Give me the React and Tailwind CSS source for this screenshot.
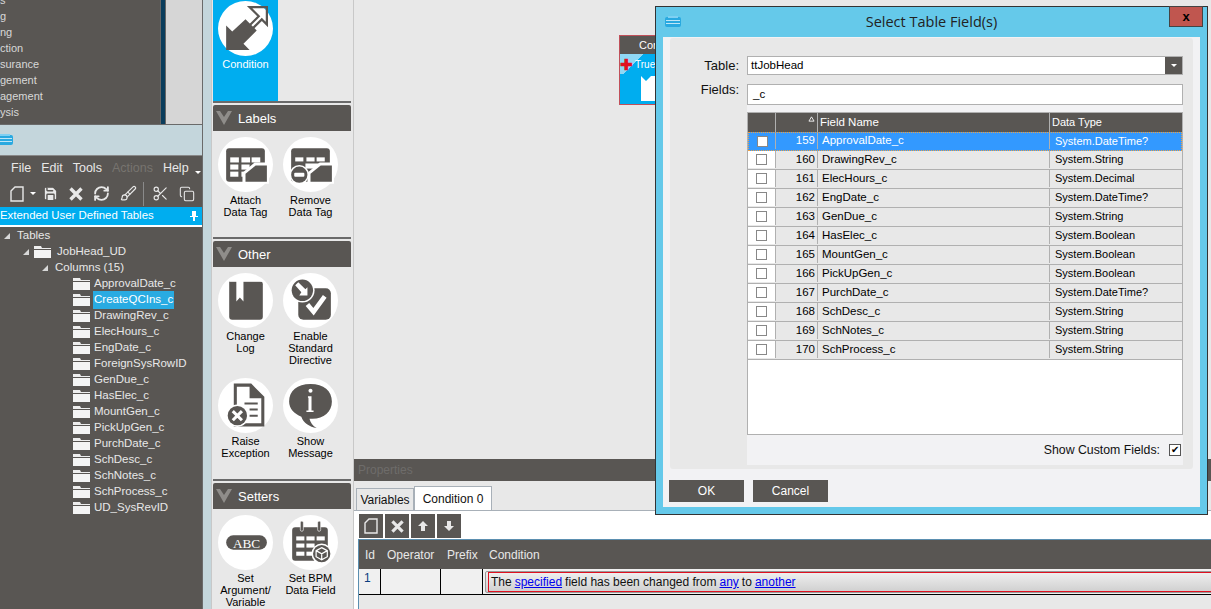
import { Brush, Copy, RefreshCw, Save, Scissors } from "lucide-react";

const columns = [
  "ApprovalDate_c", "CreateQCIns_c", "DrawingRev_c", "ElecHours_c", "EngDate_c", "ForeignSysRowID", "GenDue_c",
  "HasElec_c", "MountGen_c", "PickUpGen_c", "PurchDate_c", "SchDesc_c", "SchNotes_c", "SchProcess_c", "UD_SysRevID",
];

const fields = [
  [159, "ApprovalDate_c", "System.DateTime?"],
  [160, "DrawingRev_c", "System.String"],
  [161, "ElecHours_c", "System.Decimal"],
  [162, "EngDate_c", "System.DateTime?"],
  [163, "GenDue_c", "System.String"],
  [164, "HasElec_c", "System.Boolean"],
  [165, "MountGen_c", "System.Boolean"],
  [166, "PickUpGen_c", "System.Boolean"],
  [167, "PurchDate_c", "System.DateTime?"],
  [168, "SchDesc_c", "System.String"],
  [169, "SchNotes_c", "System.String"],
  [170, "SchProcess_c", "System.String"],
];

const clipped = ["s", "g", "ng", "ction", "surance", "gement", "agement", "ysis"];

function DbIcon({ className }) {
  return (
    <svg viewBox="0 0 16 12" className={className}>
      <rect x="0" y="1" width="16" height="10" rx="2" fill="#29a9e0" />
      <rect x="1" y="4" width="14" height="1" fill="#bfe6f7" />
      <rect x="1" y="7" width="14" height="1" fill="#bfe6f7" />
      <rect x="3" y="0" width="10" height="2" fill="#7fd0f2" />
    </svg>
  );
}

function Folder() {
  return (
    <svg viewBox="0 0 17 12" className="h-3 w-[17px] shrink-0">
      <path d="M0 0h7l1 2h9v1H0z" fill="#eeeeee" />
      <path d="M0 4h17v8H0z" fill="#f4f4f4" />
    </svg>
  );
}

function Expander() {
  return (
    <svg viewBox="0 0 6 6" className="h-[6px] w-[6px] shrink-0">
      <path d="M6 0v6H0z" fill="#d8d8d8" />
    </svg>
  );
}

function NewDoc({ className }) {
  return (
    <svg viewBox="0 0 14 16" className={className} fill="none" stroke="#e8e8e8" strokeWidth="1.4">
      <path d="M1 5l4-4h8v14H1z" />
    </svg>
  );
}

function XMark({ className }) {
  return (
    <svg viewBox="0 0 14 14" className={className} stroke="#e8e8e8" strokeWidth="3.4">
      <path d="M1.500 1.500l11 11M12.500 1.500l-11 11" />
    </svg>
  );
}

function ConditionIcon() {
  return (
    <g>
      <path d="M8 48V24l6 6 13-12 11 11-13 13 6 6z" fill="#595653" />
      <path d="M31 6h17v17l-5-5-14 14-3-3 14-14z" fill="none" stroke="#595653" strokeWidth="2.2" />
    </g>
  );
}

function TableTag({ minus }) {
  return (
    <g>
      <path d="M8 14a3 3 0 0 1 3-3h32a3 3 0 0 1 3 3v30H11a3 3 0 0 1-3-3z" fill="#595653" />
      {[12, 23, 33].map((x) => (
        <rect key={x} x={x} y={20} width={minus ? 8 : 8.500} height={minus ? 4 : 5} fill="#fff" />
      ))}
      {minus ? (
        <rect x="22" y="26" width="20" height="5" fill="#fff" />
      ) : (
        <>
          <rect x="12" y="27" width="8" height="5" fill="#fff" />
          <rect x="23" y="27" width="8" height="5" fill="#fff" />
          <rect x="12" y="34" width="8" height="5" fill="#fff" />
          <rect x="23" y="34" width="4" height="5" fill="#fff" />
        </>
      )}
      <path d="M24 35l12-10h14v21H24z" fill="#fff" />
      <path d="M27 36l10-8h11v16H27z" fill="#595653" />
      {minus && (
        <>
          <circle cx="16" cy="37" r="9.500" fill="#fff" />
          <circle cx="16" cy="37" r="8" fill="#595653" />
          <rect x="11" y="35" width="10" height="4" rx="1" fill="#fff" />
        </>
      )}
    </g>
  );
}

function BookIcon() {
  return (
    <g>
      <path d="M11 8h30a3 3 0 0 1 3 3v32a3 3 0 0 1-3 3H14a3 3 0 0 1-3-3z" fill="#595653" />
      <path d="M18 6h7v22l-3.500-4-3.500 4z" fill="#fff" />
      <path d="M11 7h33v1.500H11z" fill="#fff" />
    </g>
  );
}

function DirectiveIcon() {
  return (
    <g>
      <rect x="15" y="15" width="32" height="31" rx="5" fill="#595653" />
      <path d="M24 31l6 7 11-15" fill="none" stroke="#fff" strokeWidth="4.500" />
      <circle cx="19" cy="17" r="12" fill="#fff" />
      <circle cx="19" cy="17" r="10.500" fill="#595653" />
      <path d="M12 12l3-3 7 7 2-2v8h-8l2-3z" fill="#fff" />
    </g>
  );
}

function ExceptionIcon() {
  return (
    <g>
      <path d="M17 7h15l12 12v27H17z" fill="none" stroke="#595653" strokeWidth="3" />
      <path d="M31 7v13h13z" fill="#595653" />
      <path d="M26 25h13M31 31h8M31 37h8" stroke="#595653" strokeWidth="2" />
      <circle cx="19" cy="37" r="11" fill="#fff" />
      <circle cx="19" cy="37" r="9.500" fill="#595653" />
      <path d="M14.500 32.500l9 9M23.500 32.500l-9 9" stroke="#fff" strokeWidth="3" />
    </g>
  );
}

function MessageIcon() {
  return (
    <g>
      <path d="M27 6c13 0 21 7 21 17s-8 17-19 17c-1 0-2 0-3 0 1 4 3 7 7 9-7-1-13-5-15-11C11 35 6 30 6 23 6 13 14 6 27 6z" fill="#595653" />
      <circle cx="27" cy="12.500" r="2" fill="#fff" />
      <path d="M24.500 18h3.500v14h2v1.500h-7V32h2V19.500h-.500z" fill="#fff" />
    </g>
  );
}

function AbcIcon() {
  return (
    <g>
      <rect x="8" y="20" width="40" height="14" rx="7" fill="#595653" />
      <text x="28" y="32" textAnchor="middle" fontSize="13" fill="#fff" fontFamily="Liberation Serif, serif">ABC</text>
    </g>
  );
}

function BpmFieldIcon() {
  return (
    <g>
      <path d="M9 15a3 3 0 0 1 3-3h29a3 3 0 0 1 3 3v20H31v10H12a3 3 0 0 1-3-3z" fill="#595653" />
      <rect x="17" y="6" width="3" height="10" rx="1.500" fill="#595653" stroke="#fff" strokeWidth="0.600" />
      <rect x="34" y="6" width="3" height="10" rx="1.500" fill="#595653" stroke="#fff" strokeWidth="0.600" />
      {[[13, 21], [23, 21], [33, 21], [13, 28], [23, 28], [13, 36], [23, 36]].map(([x, y]) => (
        <rect key={`${x}-${y}`} x={x} y={y} width={8} height={4} fill="#fff" />
      ))}
      <circle cx="38" cy="38" r="10" fill="#fff" />
      <circle cx="38" cy="38" r="8.500" fill="#595653" />
      <path d="M38 32l5.500 3v6L38 44l-5.500-3v-6zM32.500 35l5.500 3 5.500-3M38 38v6" fill="none" stroke="#fff" strokeWidth="1.200" />
    </g>
  );
}

function Tool({ label, icon, className = "" }) {
  return (
    <div className={`flex w-[65px] flex-col items-center ${className}`}>
      <svg viewBox="0 0 54 54" className="h-[55px] w-[55px]">
        <circle cx="27" cy="27" r="27" fill="#fff" />
        {icon}
      </svg>
      <div className="mt-[2px] text-center text-[11px] leading-[12px] text-black">
        {label.map((l) => (
          <div key={l}>{l}</div>
        ))}
      </div>
    </div>
  );
}

function Section({ title, className = "", children }) {
  return (
    <div className={`border-t-2 border-[#6a6a6a] pt-[2px] ${className}`}>
      <div className="flex h-[26px] items-center gap-[6px] rounded-t-[2px] bg-[#595653] pl-[3px] text-[13px] text-white">
        <svg viewBox="0 0 16 14" className="h-[14px] w-4">
          <path d="M0 0h4l4 6 4-6h4L8 14z" fill="#8f8d8a" />
        </svg>
        <span className="pt-px">{title}</span>
      </div>
      {children}
    </div>
  );
}

function Dialog() {
  return (
    <div className="absolute left-[655px] top-[6px] h-[509px] w-[553px] border border-[#333] bg-[#65c9ea] font-['Liberation_Sans',sans-serif]">
      <div className="relative flex h-[30px] items-center justify-center pb-px text-[#222]">
        <DbIcon className="absolute left-[9px] top-[9px] h-3 w-4" />
        <span className="font-['Open_Sans',sans-serif] text-[14.5px]">Select Table Field(s)</span>
        <div className="absolute right-[4px] top-[-1px] flex h-[21px] w-[34px] items-center justify-center border border-[#444] bg-[#c0564f] text-[13px] font-bold text-black">
          x
        </div>
      </div>
      <div className="mx-[7px] h-[470px] bg-[#f2f2f4] px-[7px] pt-[1px]">
        <div className="flex h-[431px] rounded-[3px] bg-[#e8e8e8]">
          <div className="w-[69px] shrink-0 pt-[18px] text-right text-[13px] text-[#111]">
            <div className="flex h-[19px] items-center justify-end">Table:</div>
            <div className="mt-[5px] flex h-[19px] items-center justify-end">Fields:</div>
          </div>
          <div className="ml-[8px] flex w-[436px] shrink-0 flex-col pt-[18px]">
            <div className="flex h-[19px] items-center border border-[#b0b0b0] bg-white pl-[3px] text-[11.5px] text-black">
              <span className="flex-1">ttJobHead</span>
              <div className="flex h-full w-[17px] items-center justify-center bg-[#595653]">
                <div className="h-0 w-0 border-x-[3px] border-t-[3px] border-x-transparent border-t-white" />
              </div>
            </div>
            <div className="mt-[9px] flex h-[21px] items-center border border-[#b0b0b0] bg-white pl-[5px] text-[11.500px] text-black">_c</div>
            <div className="h-[7px] bg-[#f2f2f4]" />
            <div className="flex h-[323px] flex-col border border-[#b0b0b0] bg-white">
              <div className="flex h-[19px] bg-[#595653] text-[11.500px] text-white">
                <div className="w-[28px] border-r border-[#b0b0b0]" />
                <div className="relative w-[42px] border-r border-[#b0b0b0]">
                  <svg viewBox="0 0 8 7" className="absolute right-[2px] top-[3px] h-[6px] w-[7px]">
                    <path d="M4 1l3 5H1z" fill="none" stroke="#fff" />
                  </svg>
                </div>
                <div className="flex w-[232px] items-center border-r border-[#b0b0b0] pl-[2px]">Field Name</div>
                <div className="flex flex-1 items-center pl-[2px] text-[11px]">Data Type</div>
              </div>
              {fields.map(([id, name, type], i) => (
                <div
                  key={id}
                  className={`flex h-[19px] pb-px text-[11.500px] ${
                    i === 0
                      ? "border border-dotted border-[#f0a040] bg-[#3399ff] text-white"
                      : "border-b border-[#b0b0b0] bg-[#e8e8e8] text-black"
                  }`}
                >
                  <div className={`flex shrink-0 items-center justify-center border-r border-[#b0b0b0] ${i === 0 ? "w-[27px]" : "w-[28px] bg-white"}`}>
                    <div className="h-[11px] w-[11px] border border-[#888] bg-white" />
                  </div>
                  <div className="flex w-[42px] shrink-0 items-center justify-end border-r border-[#b0b0b0] pr-[2px]">{id}</div>
                  <div className="flex w-[232px] shrink-0 items-center border-r border-[#b0b0b0] pl-[4px]">{name}</div>
                  <div className="flex flex-1 items-center pl-[5px] text-[11px]">{type}</div>
                </div>
              ))}
            </div>
            <div className="flex h-[30px] items-center justify-end gap-[9px] bg-[#f2f2f4] pr-[2px] text-[12.3px] text-[#111]">
              Show Custom Fields:
              <div className="flex h-[12px] w-[12px] items-center justify-center border border-[#555] bg-white text-[10px] leading-none text-black">✔</div>
            </div>
          </div>
        </div>
        <div className="mt-[11px] flex gap-[9px] text-[12px] text-white">
          <div className="-ml-[1px] flex h-[22px] w-[75px] items-center justify-center bg-[#595653]">OK</div>
          <div className="flex h-[22px] w-[75px] items-center justify-center bg-[#595653]">Cancel</div>
        </div>
      </div>
    </div>
  );
}

export default function App() {
  return (
    <div className="relative flex h-[609px] w-[1211px] overflow-hidden bg-[#c4d6dc] font-['Liberation_Sans',sans-serif]">
      {/* left dock */}
      <div className="flex h-full w-[203px] shrink-0 flex-col border-r border-[#6a6a6a]">
        <div className="flex h-[125px] shrink-0 border-b border-[#6a6a6a]">
          <div className="w-[160px] overflow-hidden bg-[#595653] text-[11px] leading-[16px] text-[#d8d8d8]">
            <div className="-mt-[8px]">
              {clipped.map((t) => (
                <div key={t} className="h-[16px]">{t}</div>
              ))}
            </div>
          </div>
          <div className="w-[6px] border-x border-[#666] bg-[#0a3d5c]" />
          <div className="flex-1 bg-[#d6d6d6]" />
        </div>
        <div className="flex h-[30px] shrink-0 items-center">
          <DbIcon className="-ml-[3px] h-3 w-4" />
        </div>
        <div className="flex flex-1 flex-col bg-[#595653] text-[#e8e8e8]">
          <div className="relative flex h-[25px] items-center gap-[10px] border-t border-[#888] pl-[11px] pt-px text-[12.5px]">
            <span>File</span>
            <span>Edit</span>
            <span>Tools</span>
            <span className="text-[#77746f]">Actions</span>
            <span>Help</span>
            <div className="absolute left-[195px] top-[15px] h-0 w-0 border-x-[3px] border-t-[3px] border-x-transparent border-t-white" />
          </div>
          <div className="flex h-[27px] items-center pl-[10px]">
            <NewDoc className="h-[16px] w-[14px]" />
            <div className="ml-[6px] h-0 w-0 border-x-[3px] border-t-[3px] border-x-transparent border-t-white" />
            <Save size={17} className="ml-[6px] fill-[#e8e8e8] text-[#595653]" />
            <XMark className="ml-[10px] h-[14px] w-[14px]" />
            <RefreshCw size={17} strokeWidth={2.6} className="ml-[10px]" />
            <Brush size={17} strokeWidth={1.6} className="ml-[10px]" />
            <div className="ml-[6px] h-[24px] w-px bg-[#8a8a8a]" />
            <Scissors size={17} strokeWidth={1.6} className="ml-[8px]" />
            <Copy size={16} strokeWidth={1.6} className="ml-[10px]" />
          </div>
          <div className="flex h-[18px] items-center justify-between bg-[#00adef] pr-[4px] text-[11.400px] text-white">
            Extended User Defined Tables
            <svg viewBox="0 0 8 10" className="h-[10px] w-2">
              <path d="M2 0h4v5h2v1H5v4H3V6H0V5h2z" fill="#fff" />
            </svg>
          </div>
          <div className="h-[2px] bg-white" />
          <div className="pt-[1px] text-[11.500px]">
            <div className="flex h-[16px] items-center gap-[7px] pl-[4px]"><Expander />Tables</div>
            <div className="flex h-[16px] items-center gap-[5px] pl-[23px]"><Expander /><Folder /><span className="ml-[1px]">JobHead_UD</span></div>
            <div className="flex h-[16px] items-center gap-[7px] pl-[42px]"><Expander />Columns (15)</div>
            {columns.map((c) => (
              <div key={c} className="flex h-[16px] items-center gap-[3px] pl-[73px]">
                <Folder />
                <span className={`px-[1px] ${c === "CreateQCIns_c" ? "bg-[#29abe2] text-white" : ""}`}>{c}</span>
              </div>
            ))}
          </div>
        </div>
      </div>

      {/* activity palette */}
      <div className="ml-[8px] h-full w-[143px] shrink-0 overflow-hidden border-x border-[#c8c8c8] bg-[#e8e8e8] pl-px">
        <div className="h-[101px] w-[65px] bg-[#00adef] pt-px">
          <div className="flex flex-col items-center">
            <svg viewBox="0 0 54 54" className="h-[55px] w-[55px]">
              <circle cx="27" cy="27" r="27" fill="#fff" />
              <ConditionIcon />
            </svg>
            <div className="text-[11px] text-white">Condition</div>
          </div>
        </div>
        <div className="w-[138px]">
          <Section title="Labels" className="h-[136px]">
            <div className="flex pt-[6px]">
              <Tool label={["Attach", "Data Tag"]} icon={<TableTag />} />
              <Tool label={["Remove", "Data Tag"]} icon={<TableTag minus />} />
            </div>
          </Section>
          <Section title="Other" className="h-[242px]">
            <div className="flex pt-[6px]">
              <Tool label={["Change", "Log"]} icon={<BookIcon />} />
              <Tool label={["Enable", "Standard", "Directive"]} icon={<DirectiveIcon />} />
            </div>
            <div className="flex pt-[12px]">
              <Tool label={["Raise", "Exception"]} icon={<ExceptionIcon />} />
              <Tool label={["Show", "Message"]} icon={<MessageIcon />} />
            </div>
          </Section>
          <Section title="Setters">
            <div className="flex pt-[6px]">
              <Tool label={["Set", "Argument/", "Variable"]} icon={<AbcIcon />} />
              <Tool label={["Set BPM", "Data Field"]} icon={<BpmFieldIcon />} />
            </div>
          </Section>
        </div>
      </div>

      {/* canvas and properties */}
      <div className="flex h-full min-w-0 flex-1 flex-col bg-[#e8e8e8]">
        <div className="relative h-[459px] shrink-0 pl-px">
          <div className="absolute left-[265px] top-[35px] h-[70px] w-[40px] border border-[#c0505a] bg-[#00adef]">
            <div className="h-[18px] bg-[#595653] pl-[19px] text-[11px] leading-[18px] text-white">Con</div>
            <div className="flex h-[20px] items-center gap-[2px] bg-[linear-gradient(135deg,#8fd8f5_40%,#00adef_40%)] text-[10px] text-white">
              <span className="text-[15px] font-bold leading-none text-[#e01020]">✚</span>
              True
            </div>
            <svg viewBox="0 0 20 25" className="ml-[21px] mt-[2px] h-[25px] w-[20px]">
              <path d="M0 0l5 5 5-5h10v25H0z" fill="#fff" />
            </svg>
          </div>
        </div>
        <div className="flex h-[22px] shrink-0 items-center bg-[#595653] pl-[4px] text-[12px] text-[#6e6c6a]">Properties</div>
        <div className="flex h-[29px] shrink-0 items-end pl-[2px] text-[12px] text-[#111]">
          <div className="flex h-[22px] w-[58px] items-center justify-center border border-b-0 border-[#a8b0b8] bg-[#e8e8e8]">Variables</div>
          <div className="flex h-[24px] w-[78px] items-center justify-center border border-b-0 border-[#a8b0b8] bg-white">Condition 0</div>
        </div>
        <div className="flex flex-1 flex-col border-t border-[#a8b0b8] bg-white pl-[4px]">
          <div className="flex h-[28px] shrink-0 items-start gap-[2px] pl-px pt-[3px]">
            <div className="flex h-[24px] w-[24px] items-center justify-center bg-[#595653]"><NewDoc className="h-[16px] w-[14px]" /></div>
            <div className="flex h-[24px] w-[24px] items-center justify-center bg-[#595653]"><XMark className="h-[13px] w-[13px]" /></div>
            <div className="flex h-[24px] w-[24px] items-center justify-center bg-[#595653] text-[#e8e8e8]">
              <svg viewBox="0 0 10 10" className="h-[10px] w-[10px]"><path d="M5 0l5 5H7v5H3V5H0z" fill="currentColor" /></svg>
            </div>
            <div className="flex h-[24px] w-[24px] items-center justify-center bg-[#595653] text-[#e8e8e8]">
              <svg viewBox="0 0 10 10" className="h-[10px] w-[10px]"><path d="M5 10L0 5h3V0h4v5h3z" fill="currentColor" /></svg>
            </div>
          </div>
          <div className="flex flex-1 flex-col border-l border-t border-[#5b8fb0] bg-[#e8e8e8] text-[12px]">
            <div className="flex h-[29px] shrink-0 items-center bg-[#595653] text-[#e8e8e8]">
              <div className="w-[22px] pl-[6px]">Id</div>
              <div className="w-[60px] pl-[6px]">Operator</div>
              <div className="w-[42px] pl-[6px]">Prefix</div>
              <div className="pl-[6px]">Condition</div>
            </div>
            <div className="flex h-[26px] shrink-0 border-b border-black bg-[#f0f0f0] text-[#111]">
              <div className="w-[22px] border-r border-black pl-[5px] text-[#0a3d80]">1</div>
              <div className="w-[60px] border-r border-black" />
              <div className="w-[42px] border-r border-black" />
              <div className="min-w-0 flex-1 overflow-hidden pl-[2px] pt-[2px]">
                <div className="w-[800px] rounded-l-[2px] border border-[#999] bg-[linear-gradient(#f0f0f0,#cfcfcf)] pl-[2px]">
                  <div className="flex h-[20px] items-center gap-[3px] border border-[#e01020] pl-[2px] text-[12px]">
                    The <span className="text-[#0000ee] underline">specified</span> field has been changed from
                    <span className="text-[#0000ee] underline">any</span> to
                    <span className="text-[#0000ee] underline">another</span>
                  </div>
                </div>
              </div>
            </div>
          </div>
        </div>
      </div>

      <Dialog />
    </div>
  );
}
